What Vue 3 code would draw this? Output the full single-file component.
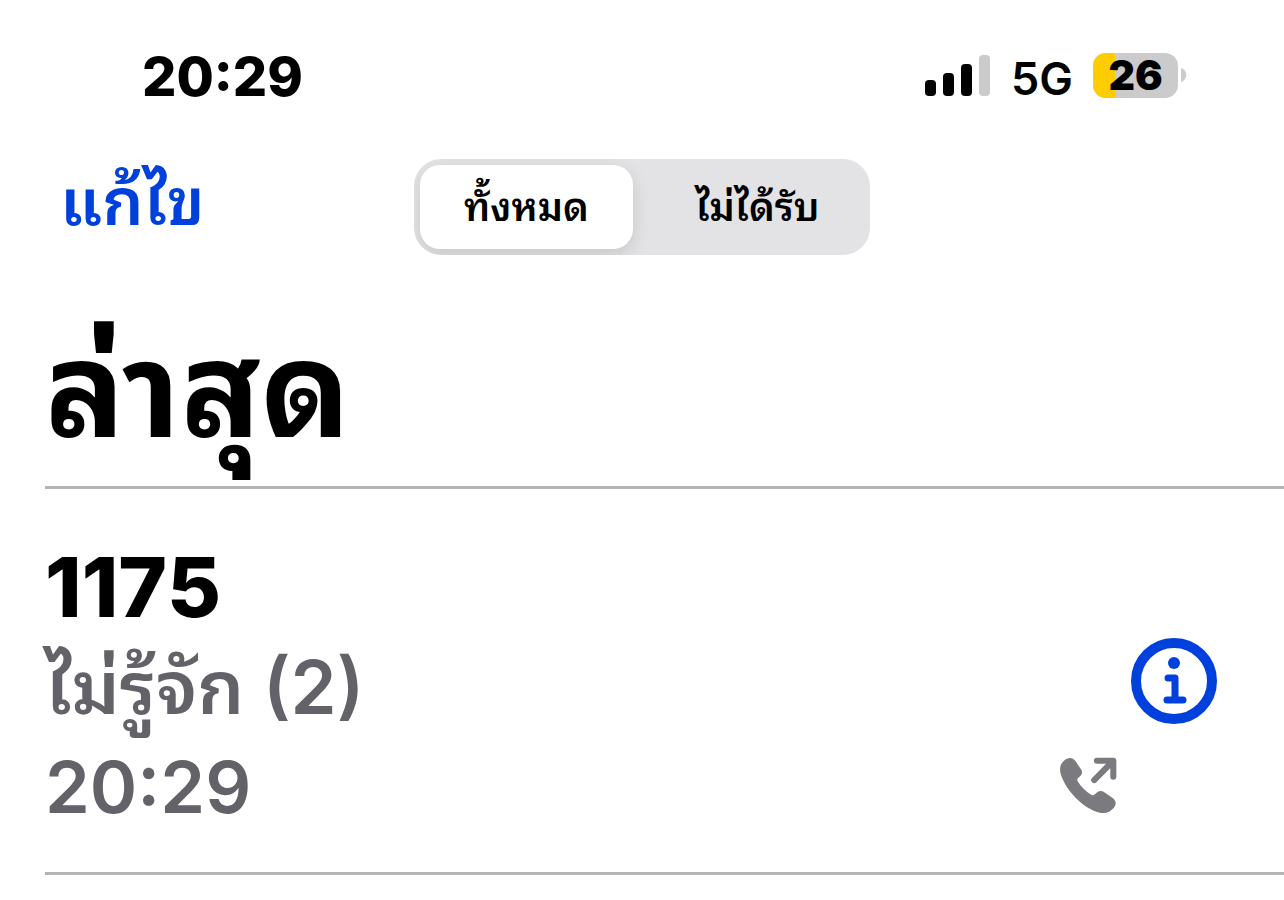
<template>
  <div class="phone">
    <header class="status-bar">
      <time class="clock">20:29</time>
      <div class="indicators">
        <svg class="signal" width="66" height="42" viewBox="0 0 66 42" aria-hidden="true">
          <rect x="0" y="25" width="11" height="16" rx="4" />
          <rect x="18" y="18" width="11" height="23" rx="4" />
          <rect x="36" y="9" width="11" height="32" rx="4" />
          <rect class="signal-off" x="54" y="0" width="11" height="41" rx="4" />
        </svg>
        <span class="network">5G</span>
        <div class="battery">
          <div class="battery-body">
            <div class="battery-level" :style="{ width: battery + '%' }"></div>
            <span class="battery-text">{{ battery }}</span>
          </div>
          <svg width="6" height="14" viewBox="0 0 6 14" aria-hidden="true">
            <path d="M0 0C7 2 7 12 0 14Z" />
          </svg>
        </div>
      </div>
    </header>

    <nav class="nav-bar">
      <button type="button" class="edit">แก้ไข</button>
      <div class="segmented">
        <button
          v-for="tab in tabs"
          :key="tab.id"
          type="button"
          class="segment"
          :class="{ active: tab.id === activeTab }"
          :aria-pressed="tab.id === activeTab"
          @click="activeTab = tab.id"
        >
          {{ tab.label }}
        </button>
      </div>
    </nav>

    <main>
      <h1 class="title">ล่าสุด</h1>
      <ul class="calls">
        <li v-for="call in calls" :key="call.number" class="call">
          <div class="details">
            <div class="number">{{ call.number }}</div>
            <div class="label">{{ call.label }} ({{ call.count }})</div>
            <time class="time">{{ call.time }}</time>
          </div>
          <div class="actions">
            <button type="button" class="info" aria-label="ข้อมูล">
              <svg width="86" height="86" viewBox="0 0 86 86">
                <circle class="line ring" cx="43" cy="43" r="38" />
                <circle class="dot" cx="43" cy="25" r="6" />
                <path class="line stem" d="M37 40H44V62M36 62H52" />
              </svg>
            </button>
            <svg class="outgoing" width="57" height="57" viewBox="0 0 170 170" aria-hidden="true">
              <path
                d="M12 11C24 0 37 1 46 12L63 37C68 45 66 52 59 58L54 63C51 66 51 69 53 73C63 89 78 104 94 113C98 115 101 114 104 111L110 106C118 100 125 100 132 105L157 122C168 131 169 141 160 152C148 166 132 171 108 163C62 147 18 98 3 54C-3 34 1 21 12 11Z"
              />
              <path class="arrow" d="M102 69L155 15M110 11H159V59" />
            </svg>
          </div>
        </li>
      </ul>
    </main>
  </div>
</template>

<script setup>
import { ref } from 'vue'

const battery = ref(26)
const activeTab = ref('all')

const tabs = [
  { id: 'all', label: 'ทั้งหมด' },
  { id: 'missed', label: 'ไม่ได้รับ' }
]

const calls = ref([
  { number: '1175', label: 'ไม่รู้จัก', count: 2, time: '20:29' }
])
</script>

<style>
body {
  margin: 0;
  background: #fff;
}
</style>

<style scoped>
.phone {
  font-family: Inter, "Noto Sans Thai Looped", Loma, Waree, Garuda, "Noto Sans Thai", "Noto Sans", sans-serif;
  color: #000;
  overflow: hidden;
}

button {
  border: 0;
  padding: 0;
  background: none;
  font-family: inherit;
  cursor: pointer;
}

svg {
  display: block;
}

.status-bar {
  display: flex;
  align-items: center;
  justify-content: space-between;
  height: 64px;
  padding: 44px 97px 0 142px;
}

.clock {
  padding-top: 2px;
  font-size: 54px;
  line-height: 64px;
  font-weight: 800;
}

.indicators {
  display: flex;
  align-items: center;
  gap: 20px;
}

.signal-off {
  fill: #cbcbcb;
}

.network {
  padding-top: 6px;
  font-size: 45px;
  line-height: 52px;
  font-weight: 600;
}

.battery {
  display: flex;
  align-items: center;
  gap: 3px;
  padding-bottom: 2px;
  fill: #cbcbcb;
}

.battery-body {
  position: relative;
  width: 85px;
  height: 45px;
  border-radius: 13px;
  background: #cbcbcb;
}

.battery-level {
  height: 100%;
  border-radius: 13px 0 0 13px;
  background: #ffcc00;
}

.battery-text {
  position: absolute;
  inset: 0;
  font-size: 41px;
  line-height: 45px;
  font-weight: 900;
  text-align: center;
}

.nav-bar {
  display: grid;
  grid-template-columns: 1fr 456px 1fr;
  align-items: center;
  margin-top: 51px;
  padding: 0 60px;
}

.edit {
  justify-self: start;
  padding-bottom: 10px;
  font-size: 65px;
  line-height: 86px;
  font-weight: 600;
  color: #0040dd;
}

.segmented {
  display: flex;
  gap: 18px;
  height: 84px;
  padding: 6px;
  border-radius: 27px;
  background: #e3e3e6;
  overflow: hidden;
}

.segment {
  flex: 1;
  padding-bottom: 8px;
  border-radius: 20px;
  font-size: 39px;
  font-weight: 600;
  color: #000;
}

.segment.active {
  background: #fff;
  box-shadow: 0 6px 18px rgba(0, 0, 0, 0.12);
}

.title {
  margin: 0;
  padding: 46px 45px 9px;
  font-size: 132px;
  line-height: 176px;
  font-weight: 700;
}

.calls {
  list-style: none;
  margin: 0 0 0 45px;
  padding: 0;
  border-top: 3px solid #b4b4b5;
}

.call {
  display: flex;
  justify-content: space-between;
  padding: 48px 67px 35px 0;
  border-bottom: 3px solid #b4b4b5;
}

.number {
  font-size: 83px;
  line-height: 100px;
  font-weight: 800;
  font-kerning: none;
  font-feature-settings: "calt" 0;
}

.label,
.time {
  display: block;
  line-height: 100px;
  font-weight: 600;
  color: #636268;
}

.label {
  font-size: 74px;
}

.time {
  font-size: 72px;
}

.actions {
  display: flex;
  flex-direction: column;
  align-items: flex-end;
  gap: 33px;
  padding-top: 101px;
}

.info {
  color: #0040dd;
}

.dot {
  fill: currentColor;
}

.line {
  fill: none;
  stroke: currentColor;
  stroke-linecap: round;
  stroke-linejoin: round;
}

.ring {
  stroke-width: 10;
}

.stem {
  stroke-width: 7;
}

.outgoing {
  margin-right: 100px;
  fill: #7b7a7f;
}

.arrow {
  fill: none;
  stroke: #7b7a7f;
  stroke-width: 18;
  stroke-linecap: round;
  stroke-linejoin: round;
}
</style>
